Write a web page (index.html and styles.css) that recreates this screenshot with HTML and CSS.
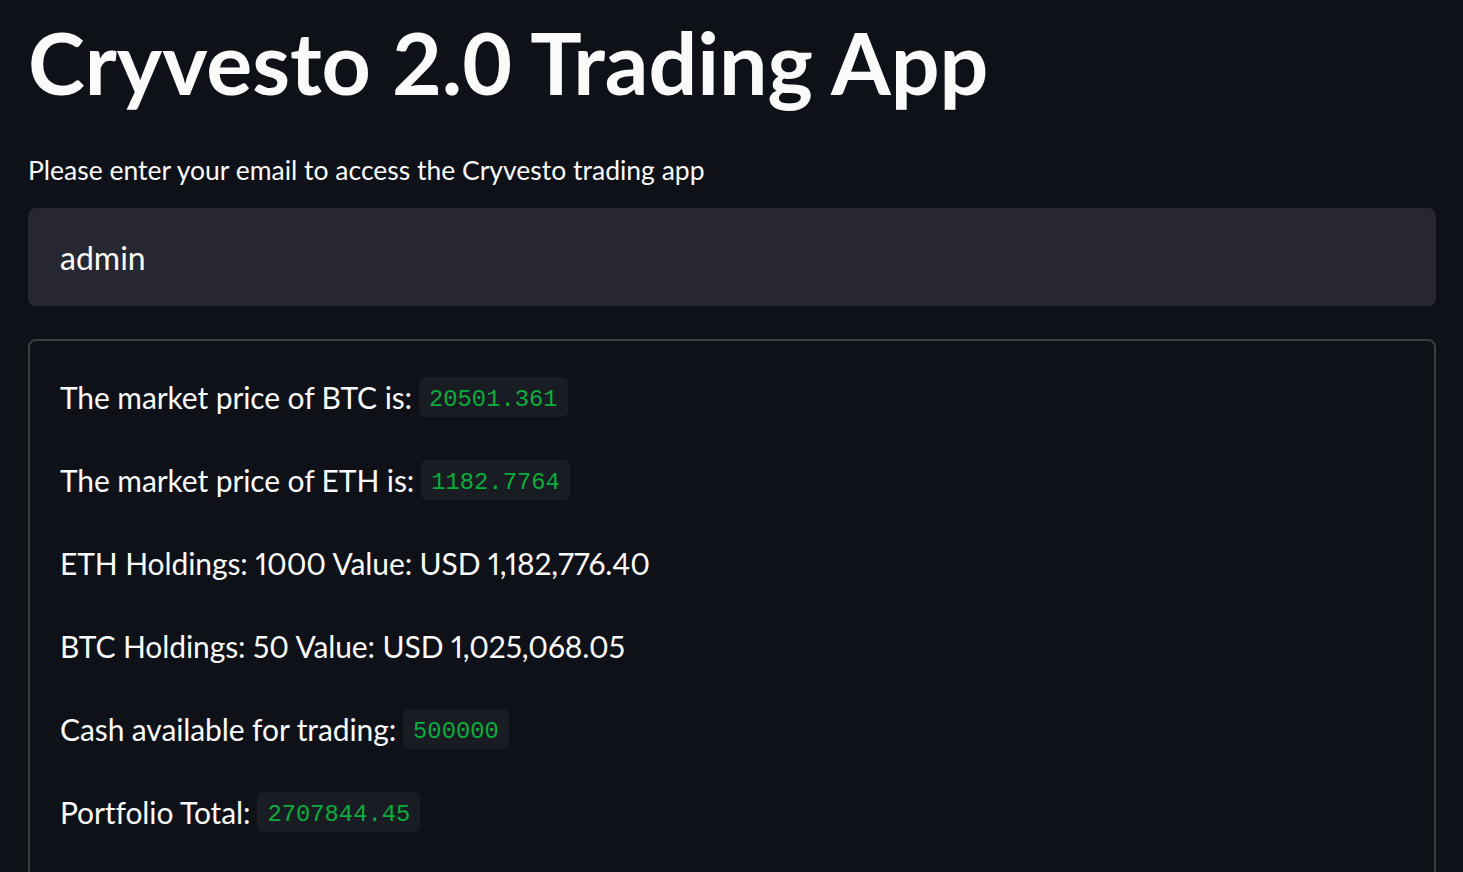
FILE: index.html
```html
<!DOCTYPE html>
<html lang="en">
<head>
<meta charset="utf-8">
<title>Cryvesto 2.0 Trading App</title>
<link rel="stylesheet" href="styles.css">
</head>
<body>
<main class="main">
  <h1 class="title">Cryvesto 2.0 Trading App</h1>
  <label class="label" for="email">Please enter your email to access the Cryvesto trading app</label>
  <div class="input-wrap">
    <input class="input" id="email" type="text" value="admin">
  </div>
  <section class="panel">
    <p class="row">The market price of BTC is:<code class="code">20501.361</code></p>
    <p class="row">The market price of ETH is:<code class="code">1182.7764</code></p>
    <p class="row">ETH Holdings: 1000 Value: USD 1,182,776.40</p>
    <p class="row">BTC Holdings: 50 Value: USD 1,025,068.05</p>
    <p class="row">Cash available for trading:<code class="code">500000</code></p>
    <p class="row">Portfolio Total:<code class="code">2707844.45</code></p>
  </section>
</main>
</body>
</html>
```
FILE: styles.css
```css
html, body {
  margin: 0;
  padding: 0;
  background: #0e1117;
  color: #fafafa;
  font-family: "Lato", "Noto Sans", sans-serif;
}

.main {
  padding: 14px 27px 0 28px;
  display: flex;
  flex-direction: column;
}

.title {
  margin: 0;
  font-size: 86px;
  font-weight: 700;
  line-height: 96px;
}

.label {
  display: block;
  margin-top: 44px;
  font-size: 26.5px;
  line-height: 32px;
}

.input-wrap {
  margin-top: 22px;
  height: 98px;
  background: #262730;
  border-radius: 8px;
  display: flex;
  align-items: center;
}

.input {
  border: none;
  outline: none;
  background: transparent;
  color: #fafafa;
  font-family: inherit;
  font-size: 32px;
  padding: 0 32px;
  width: 100%;
}

.panel {
  margin-top: 33px;
  border: 2px solid rgba(250, 250, 250, 0.2);
  border-radius: 8px;
  padding: 36px 30px 60px 30px;
  display: flex;
  flex-direction: column;
  gap: 43px;
}

.row {
  margin: 0;
  height: 40px;
  display: flex;
  align-items: center;
  gap: 7px;
  font-size: 30px;
  letter-spacing: -0.1px;
  font-variant-numeric: proportional-nums;
  white-space: pre;
}

.code {
  display: inline-flex;
  align-items: center;
  height: 40px;
  padding: 4px 10px 0 10px;
  box-sizing: border-box;
  border-radius: 6px;
  background: #1a1c23;
  color: #0aad3d;
  font-family: "Liberation Mono", "DejaVu Sans Mono", monospace;
  font-size: 23.8px;
  letter-spacing: 0;
}
```
